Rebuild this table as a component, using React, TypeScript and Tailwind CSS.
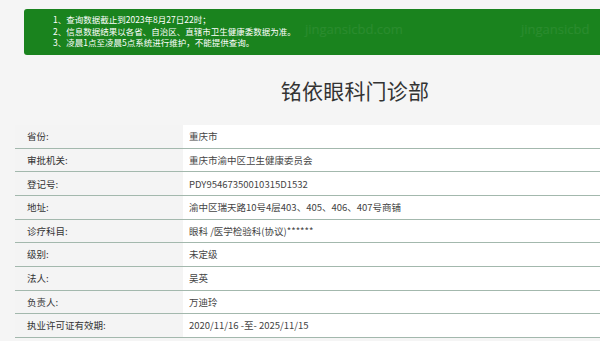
const rows: [string, string][] = [
  ["省份:", "重庆市"],
  ["审批机关:", "重庆市渝中区卫生健康委员会"],
  ["登记号:", "PDY95467350010315D1532"],
  ["地址:", "渝中区瑞天路10号4层403、405、406、407号商铺"],
  ["诊疗科目:", "眼科 /医学检验科(协议)******"],
  ["级别:", "未定级"],
  ["法人:", "吴英"],
  ["负责人:", "万迪玲"],
  ["执业许可证有效期:", "2020/11/16 -至- 2025/11/15"],
];

const notices = [
  "1、查询数据截止到2023年8月27日22时；",
  "2、信息数据结果以各省、自治区、直辖市卫生健康委数据为准。",
  "3、凌晨1点至凌晨5点系统进行维护，不能提供查询。",
];

export default function App() {
  return (
    <div className="h-[341px] w-[600px] overflow-hidden bg-[#f5f5f5] font-['Noto_Sans_CJK_SC',sans-serif] text-[#333]">
      <div className="ml-[15px] w-[680px] pt-[9px]">
        <div className="relative ml-[9px] h-[46px] overflow-hidden rounded-[3px] bg-[#1a831e] pl-[29px] pt-[5px] text-[8.5px] leading-[11.5px] text-white">
          {notices.map((n) => (
            <div key={n}>{n}</div>
          ))}
          <span className="absolute left-[281px] top-[15px] font-['Open_Sans',sans-serif] text-[13px] text-white/[0.07]">
            jingansicbd.com
          </span>
          <span className="absolute left-[497px] top-[15px] font-['Open_Sans',sans-serif] text-[13px] text-white/[0.07]">
            jingansicbd
          </span>
        </div>

        <h1 className="mt-[23px] text-center text-[21px] leading-[24px] tracking-[0.2px] text-[#333]">
          铭依眼科门诊部
        </h1>

        <div className="mt-[23px] bg-white">
          {rows.map(([label, value]) => (
            <div
              key={label}
              className="flex h-[23.67px] items-center border-b-[1.5px] border-[#a3b8ad] text-[9.5px]"
            >
              <div className="flex h-full w-[168px] items-center bg-[#f4f4f4] pl-[12px]">
                {label}
              </div>
              <div className="pl-[6px] text-[#444]">{value}</div>
            </div>
          ))}
        </div>
      </div>
    </div>
  );
}
